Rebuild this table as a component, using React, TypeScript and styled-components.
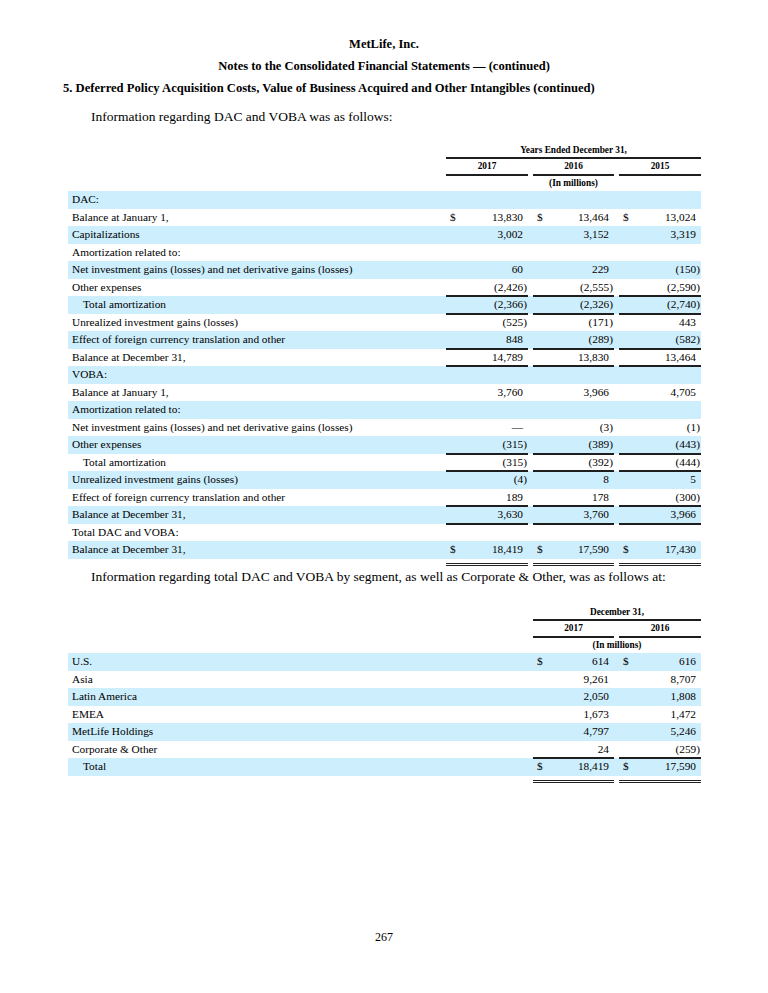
import React from "react";
import styled, { createGlobalStyle } from "styled-components";

const GlobalStyle = createGlobalStyle`
  html, body { margin: 0; padding: 0; background: #ffffff; }
  body {
    font-family: "Liberation Serif", "Times New Roman", serif;
    color: #000000;
  }
`;

const Page = styled.div`
  width: 768px;
  height: 993px;
  box-sizing: border-box;
  padding-top: 36px;
  display: flex;
  flex-direction: column;
`;

const CompanyTitle = styled.div`
  text-align: center;
  font-weight: bold;
  font-size: 12.5px;
  line-height: 16px;
`;

const NotesTitle = styled(CompanyTitle)`
  margin-top: 6px;
`;

const SectionTitle = styled.div`
  margin-top: 6px;
  padding-left: 63px;
  font-weight: bold;
  font-size: 12.6px;
  line-height: 16px;
`;

const Paragraph = styled.p<{ $top: number }>`
  margin: ${(p) => p.$top}px 0 0 0;
  padding-left: 91px;
  font-size: 13.5px;
  line-height: 16px;
`;

const Table = styled.div<{ $top: number }>`
  margin: ${(p) => p.$top}px 0 0 68px;
  width: 633px;
  display: flex;
  flex-direction: column;
`;

const Grid = styled.div<{ $cols: string; $h: number; $shade?: boolean }>`
  display: grid;
  grid-template-columns: ${(p) => p.$cols};
  column-gap: 5px;
  height: ${(p) => p.$h}px;
  background: ${(p) => (p.$shade ? "#cdeefc" : "transparent")};
  font-size: 11.3px;
  line-height: ${(p) => p.$h}px;
`;

const HeadCell = styled.div<{ $span?: boolean; $ruled?: boolean }>`
  grid-column: ${(p) => (p.$span ? "2 / -1" : "auto")};
  position: relative;
  text-align: center;
  font-weight: bold;
  font-size: 9.3px;
  &::after {
    content: "";
    display: ${(p) => (p.$ruled ? "block" : "none")};
    position: absolute;
    left: 0;
    right: 0;
    bottom: -1px;
    height: 2px;
    background: #1e1e1e;
  }
`;

const Label = styled.div<{ $indent?: boolean }>`
  padding-left: ${(p) => (p.$indent ? 15 : 4)}px;
  white-space: nowrap;
`;

const Value = styled.div<{ $rule?: "single" | "double" }>`
  position: relative;
  display: flex;
  justify-content: space-between;
  padding: 0 5px 0 4px;
  white-space: nowrap;
  &::after {
    content: "";
    display: ${(p) => (p.$rule ? "block" : "none")};
    position: absolute;
    left: 0;
    right: 0;
    bottom: ${(p) => (p.$rule === "double" ? "-7px" : "-1px")};
    height: ${(p) => (p.$rule === "double" ? "1px" : "2px")};
    background: ${(p) => (p.$rule === "double" ? "transparent" : "#1e1e1e")};
    border-top: ${(p) => (p.$rule === "double" ? "1.5px solid #222" : "none")};
    border-bottom: ${(p) => (p.$rule === "double" ? "1.5px solid #222" : "none")};
  }
`;

const Amount = styled.span`
  margin-left: auto;
`;

const Paren = styled.span`
  margin-right: -4px;
`;

const PageNumber = styled.div`
  margin-top: auto;
  margin-bottom: 48px;
  text-align: center;
  font-size: 12px;
  line-height: 16px;
`;

type Row = {
  label: string;
  v?: string[];
  dollar?: boolean;
  indent?: boolean;
  rule?: "single" | "double";
};

const dacRows: Row[] = [
  { label: "DAC:" },
  { label: "Balance at January 1,", dollar: true, v: ["13,830", "13,464", "13,024"] },
  { label: "Capitalizations", v: ["3,002", "3,152", "3,319"] },
  { label: "Amortization related to:" },
  { label: "Net investment gains (losses) and net derivative gains (losses)", v: ["60", "229", "(150)"] },
  { label: "Other expenses", v: ["(2,426)", "(2,555)", "(2,590)"], rule: "single" },
  { label: "Total amortization", indent: true, v: ["(2,366)", "(2,326)", "(2,740)"], rule: "single" },
  { label: "Unrealized investment gains (losses)", v: ["(525)", "(171)", "443"] },
  { label: "Effect of foreign currency translation and other", v: ["848", "(289)", "(582)"], rule: "single" },
  { label: "Balance at December 31,", v: ["14,789", "13,830", "13,464"], rule: "single" },
  { label: "VOBA:" },
  { label: "Balance at January 1,", v: ["3,760", "3,966", "4,705"] },
  { label: "Amortization related to:" },
  { label: "Net investment gains (losses) and net derivative gains (losses)", v: ["—", "(3)", "(1)"] },
  { label: "Other expenses", v: ["(315)", "(389)", "(443)"], rule: "single" },
  { label: "Total amortization", indent: true, v: ["(315)", "(392)", "(444)"], rule: "single" },
  { label: "Unrealized investment gains (losses)", v: ["(4)", "8", "5"] },
  { label: "Effect of foreign currency translation and other", v: ["189", "178", "(300)"], rule: "single" },
  { label: "Balance at December 31,", v: ["3,630", "3,760", "3,966"], rule: "single" },
  { label: "Total DAC and VOBA:" },
  { label: "Balance at December 31,", dollar: true, v: ["18,419", "17,590", "17,430"], rule: "double" },
];

const segmentRows: Row[] = [
  { label: "U.S.", dollar: true, v: ["614", "616"] },
  { label: "Asia", v: ["9,261", "8,707"] },
  { label: "Latin America", v: ["2,050", "1,808"] },
  { label: "EMEA", v: ["1,673", "1,472"] },
  { label: "MetLife Holdings", v: ["4,797", "5,246"] },
  { label: "Corporate & Other", v: ["24", "(259)"], rule: "single" },
  { label: "Total", indent: true, dollar: true, v: ["18,419", "17,590"], rule: "double" },
];

function Num({ text }: { text: string }) {
  if (text.startsWith("(") && text.endsWith(")")) {
    return (
      <Amount>
        {text.slice(0, -1)}
        <Paren>)</Paren>
      </Amount>
    );
  }
  return <Amount>{text}</Amount>;
}

function DataTable({
  cols,
  top,
  title,
  years,
  rows,
  colCount,
}: {
  cols: string;
  top: number;
  title: string;
  years: string[];
  rows: Row[];
  colCount: number;
}) {
  return (
    <Table $top={top}>
      <Grid $cols={cols} $h={16}>
        <div />
        <HeadCell $span $ruled>
          {title}
        </HeadCell>
      </Grid>
      <Grid $cols={cols} $h={17}>
        <div />
        {years.map((y) => (
          <HeadCell key={y} $ruled>
            {y}
          </HeadCell>
        ))}
      </Grid>
      <Grid $cols={cols} $h={16}>
        <div />
        <HeadCell $span>(In millions)</HeadCell>
      </Grid>
      {rows.map((r, i) => (
        <Grid key={i} $cols={cols} $h={17.5} $shade={i % 2 === 0}>
          <Label $indent={r.indent}>{r.label}</Label>
          {Array.from({ length: colCount }).map((_, c) => (
            <Value key={c} $rule={r.v ? r.rule : undefined}>
              {r.dollar && <span>$</span>}
              {r.v && <Num text={r.v[c]} />}
            </Value>
          ))}
        </Grid>
      ))}
    </Table>
  );
}

export default function App() {
  return (
    <>
      <GlobalStyle />
      <Page>
        <CompanyTitle>MetLife, Inc.</CompanyTitle>
        <NotesTitle>Notes to the Consolidated Financial Statements — (continued)</NotesTitle>
        <SectionTitle>
          5. Deferred Policy Acquisition Costs, Value of Business Acquired and Other Intangibles (continued)
        </SectionTitle>
        <Paragraph $top={13}>Information regarding DAC and VOBA was as follows:</Paragraph>
        <DataTable
          cols="373px 82px 81px 82px"
          top={17}
          title="Years Ended December 31,"
          years={["2017", "2016", "2015"]}
          rows={dacRows}
          colCount={3}
        />
        <Paragraph $top={10.5}>
          Information regarding total DAC and VOBA by segment, as well as Corporate &amp; Other, was as follows at:
        </Paragraph>
        <DataTable
          cols="460px 81px 82px"
          top={19}
          title="December 31,"
          years={["2017", "2016"]}
          rows={segmentRows}
          colCount={2}
        />
        <PageNumber>267</PageNumber>
      </Page>
    </>
  );
}
